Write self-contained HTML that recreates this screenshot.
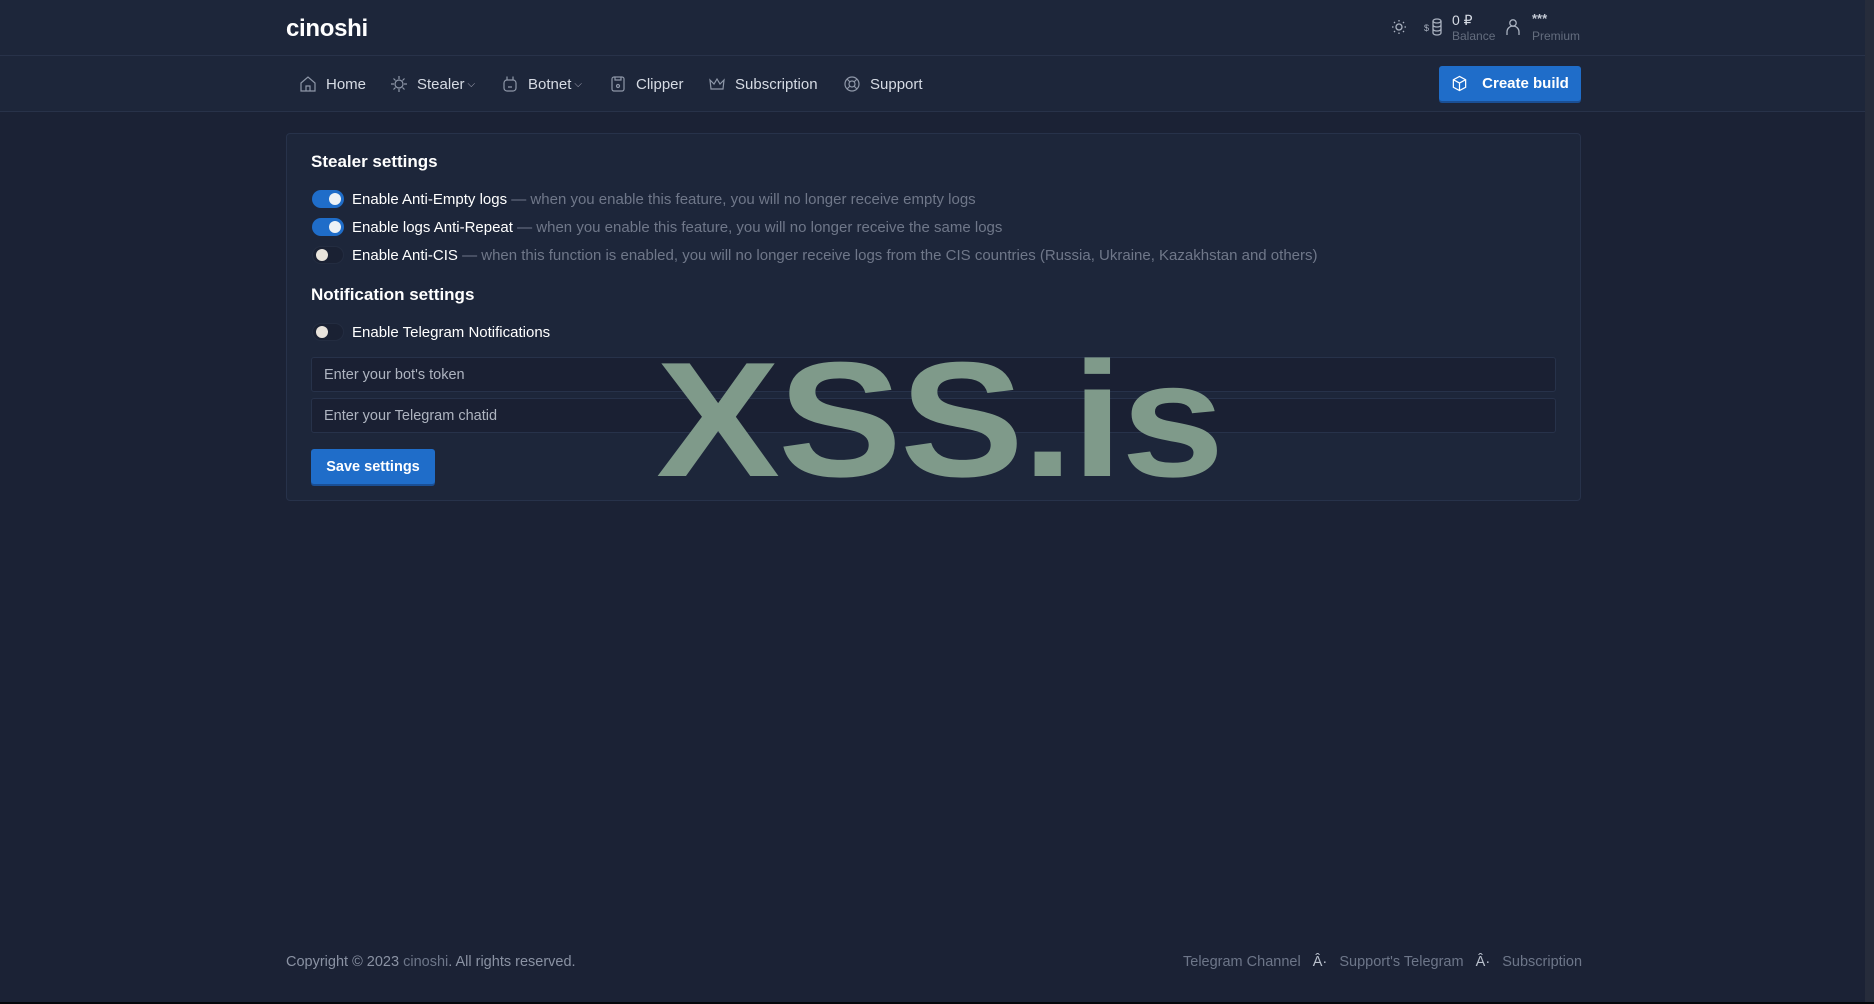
<!DOCTYPE html>
<html><head><meta charset="utf-8">
<style>
*{box-sizing:border-box;margin:0;padding:0}
html,body{width:1874px;height:1004px;overflow:hidden}
body{background:#1b2235;font-family:"Liberation Sans",sans-serif;color:#e6e9ef;position:relative}
.strip{position:absolute;right:0;top:0;width:9px;height:1004px;background:#262c3b}
.bottom{position:absolute;left:0;bottom:0;width:1874px;height:2px;background:#05070b}
.hdr{position:absolute;left:0;top:0;width:1865px;height:56px;background:#1d263a;border-bottom:1px solid #283249}
.nav{position:absolute;left:0;top:56px;width:1865px;height:56px;background:#1d263a;border-bottom:1px solid #283249}
.logo{position:absolute;left:286px;top:15px;font-size:24px;font-weight:bold;color:#fff;letter-spacing:-0.3px}
.navitem{position:absolute;top:0;height:56px;display:flex;align-items:center;font-size:15px;color:#d6dbe4}
.navitem svg{margin-right:9px}
.car{font-size:10px;margin-left:3px;color:#aab}
.btn{position:absolute;background:#1f6dc9;color:#fff;border-radius:3px;font-weight:bold;display:flex;align-items:center;justify-content:center;font-size:15px;box-shadow:0 2px 0 #1a4f95}
.card{position:absolute;left:286px;top:133px;width:1295px;height:368px;background:#1d263a;border:1px solid #27324a;border-radius:4px}
.h{position:absolute;left:24px;font-size:17px;font-weight:bold;color:#fff}
.row{position:absolute;left:25px;display:flex;align-items:center;font-size:15px;color:#fff;white-space:nowrap}
.row .d{color:#6f7789}
.tg{width:32px;height:18px;border-radius:9px;margin-right:8px;position:relative;background:#1f6dc9}
.tg::after{content:"";position:absolute;top:3px;right:3px;width:12px;height:12px;border-radius:50%;background:#eef2f6}
.tg.off{background:#1a2133;border:1px solid #232c40}
.tg.off::after{left:3px;right:auto;top:2px;background:#e9e4dc}
.inp{position:absolute;left:24px;width:1245px;height:35px;background:#1a2033;border:1px solid #27324a;border-radius:3px;font-size:14.5px;color:#aeb4c0;padding:9px 12px}
.wm{position:absolute;left:656px;top:338px;font-size:178px;font-weight:bold;color:#7f9a8a;letter-spacing:-2px;line-height:1;transform:scale(1.045,0.92);transform-origin:0 0;white-space:nowrap}
.foot{position:absolute;top:954px;font-size:14.5px;color:#8a92a3}
</style></head><body>
<div class="hdr">
 <div class="logo">cinoshi</div>
 <svg style="position:absolute;left:1391px;top:19px" width="16" height="16" viewBox="0 0 16 16" fill="none" stroke="#aab2c0" stroke-width="1.3"><circle cx="8" cy="8" r="3"/><path d="M8 1v1.5M8 13.5V15M1 8h1.5M13.5 8H15M3 3l1 1M12 12l1 1M3 13l1-1M12 4l1-1"/></svg>
 <svg style="position:absolute;left:1424px;top:18px" width="20" height="18" viewBox="0 0 20 18" fill="none" stroke="#aab2c0" stroke-width="1.3"><text x="0" y="13" font-size="9" fill="#aab2c0" stroke="none" font-family="Liberation Sans">$</text><ellipse cx="13" cy="3" rx="4" ry="2"/><path d="M9 3v12c0 1.1 1.8 2 4 2s4-.9 4-2V3M9 7c0 1.1 1.8 2 4 2s4-.9 4-2M9 11c0 1.1 1.8 2 4 2s4-.9 4-2"/></svg>
 <div style="position:absolute;left:1452px;top:12px;font-size:14px;color:#d6dbe4">0 ₽</div>
 <div style="position:absolute;left:1452px;top:29px;font-size:12px;color:#646d7e">Balance</div>
 <svg style="position:absolute;left:1506px;top:18px" width="14" height="18" viewBox="0 0 14 18" fill="none" stroke="#aab2c0" stroke-width="1.3"><circle cx="7" cy="5" r="3.2"/><path d="M1 17v-3a6 6 0 0 1 12 0v3"/></svg>
 <div style="position:absolute;left:1532px;top:11px;font-size:13px;color:#c5cbd6;font-weight:bold">***</div>
 <div style="position:absolute;left:1532px;top:29px;font-size:12px;color:#646d7e">Premium</div>
</div>
<div class="nav">
 <div class="navitem" style="left:299px"><svg width="18" height="18" viewBox="0 0 18 18" fill="none" stroke="#8e97a8" stroke-width="1.2"><path d="M2 8L9 2l7 6v8H2z"/><path d="M7 16v-5h4v5"/></svg>Home</div>
 <div class="navitem" style="left:390px"><svg width="18" height="18" viewBox="0 0 18 18" fill="none" stroke="#8e97a8" stroke-width="1.2"><circle cx="9" cy="9" r="4"/><path d="M9 1v3M9 14v3M1 9h3M14 9h3M3.5 3.5l2 2M12.5 12.5l2 2M3.5 14.5l2-2M12.5 5.5l2-2"/></svg>Stealer<span class="car">⌵</span></div>
 <div class="navitem" style="left:501px"><svg width="18" height="18" viewBox="0 0 18 18" fill="none" stroke="#8e97a8" stroke-width="1.2"><rect x="3" y="5" width="12" height="11" rx="3"/><path d="M6 1.5v3.5M12 1.5v3.5M7 12h4"/></svg>Botnet<span class="car">⌵</span></div>
 <div class="navitem" style="left:609px"><svg width="18" height="18" viewBox="0 0 18 18" fill="none" stroke="#8e97a8" stroke-width="1.2"><rect x="3" y="2" width="12" height="14" rx="2"/><path d="M6 2v3h6V2"/><circle cx="9" cy="11" r="1.5"/></svg>Clipper</div>
 <div class="navitem" style="left:708px"><svg width="18" height="18" viewBox="0 0 18 18" fill="none" stroke="#8e97a8" stroke-width="1.2"><path d="M2 5l4 4 3-5 3 5 4-4-1 9H3z"/></svg>Subscription</div>
 <div class="navitem" style="left:843px"><svg width="18" height="18" viewBox="0 0 18 18" fill="none" stroke="#8e97a8" stroke-width="1.2"><circle cx="9" cy="9" r="7"/><circle cx="9" cy="9" r="3"/><path d="M4 4l3 3M14 4l-3 3M4 14l3-3M14 14l-3-3"/></svg>Support</div>
 <div class="btn" style="left:1439px;top:10px;width:142px;height:35px"><svg width="17" height="17" viewBox="0 0 18 18" fill="none" stroke="#fff" stroke-width="1.3" style="margin-right:14px"><path d="M9 1.5l6.5 3.5v8L9 16.5 2.5 13V5zM2.5 5L9 8.5 15.5 5M9 8.5v8"/></svg>Create build</div>
</div>
<div class="card">
 <div class="h" style="top:18px">Stealer settings</div>
 <div class="row" style="top:56px"><div class="tg"></div>Enable Anti-Empty logs&nbsp;<span class="d">— when you enable this feature, you will no longer receive empty logs</span></div>
 <div class="row" style="top:84px"><div class="tg"></div>Enable logs Anti-Repeat&nbsp;<span class="d">— when you enable this feature, you will no longer receive the same logs</span></div>
 <div class="row" style="top:112px"><div class="tg off"></div>Enable Anti-CIS&nbsp;<span class="d">— when this function is enabled, you will no longer receive logs from the CIS countries (Russia, Ukraine, Kazakhstan and others)</span></div>
 <div class="h" style="top:151px">Notification settings</div>
 <div class="row" style="top:189px"><div class="tg off"></div>Enable Telegram Notifications</div>
 <div class="inp" style="top:223px">Enter your bot's token</div>
 <div class="inp" style="top:264px">Enter your Telegram chatid</div>
 <div class="btn" style="left:24px;top:315px;width:124px;height:35px;font-size:14.5px">Save settings</div>
</div>
<div class="wm">XSS.is</div>
<div class="foot" style="left:286px">Copyright © 2023 <span style="color:#6d7689">cinoshi</span>. All rights reserved.</div>
<div class="foot" style="left:1183px;color:#6d7689">Telegram Channel &nbsp;&nbsp;<span style="color:#b9c0cc">Â·</span>&nbsp;&nbsp; Support's Telegram &nbsp;&nbsp;<span style="color:#b9c0cc">Â·</span>&nbsp;&nbsp; Subscription</div>
<div class="strip"></div>
<div class="bottom"></div>
</body></html>
